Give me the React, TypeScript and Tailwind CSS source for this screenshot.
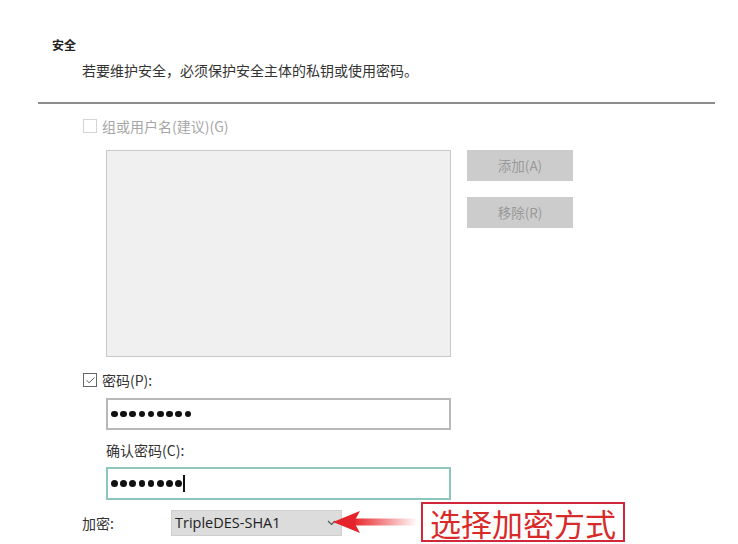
import { Check } from 'lucide-react'

const cjk = '"Noto Sans CJK SC", "Noto Sans", sans-serif'

function Dots({ count }: { count: number }) {
  return (
    <div className="flex items-center gap-[2.6px]">
      {Array.from({ length: count }).map((_, i) => (
        <span key={i} className="w-[6.6px] h-[6.6px] rounded-full bg-[#111]" />
      ))}
    </div>
  )
}

function RedArrow() {
  return (
    <svg width="88" height="26" viewBox="0 0 88 26" className="absolute left-[332px] top-[509px]">
      <defs>
        <linearGradient id="shaft" x1="0" y1="0" x2="1" y2="0">
          <stop offset="0" stopColor="#e8262b" stopOpacity="1" />
          <stop offset="1" stopColor="#e8262b" stopOpacity="0" />
        </linearGradient>
      </defs>
      <rect x="22" y="9.5" width="64" height="7" fill="url(#shaft)" />
      <path d="M1 13 L28 2 L22 13 L28 24 Z" fill="#e4232a" />
    </svg>
  )
}

export default function App() {
  return (
    <div className="w-[738px] h-[544px] bg-white relative overflow-hidden text-[#222]" style={{ fontFamily: cjk }}>
      {/* Header */}
      <div className="pt-[38px] pl-[52px] text-[12px] leading-[14px] font-bold">安全</div>
      <div className="mt-[10px] pl-[82px] text-[14px] leading-[16px] text-[#333]">
        若要维护安全，必须保护安全主体的私钥或使用密码。
      </div>
      <div className="mt-[24px] ml-[38px] w-[677px] h-[2px] bg-[#8c8c8c]" />

      {/* Group / user names */}
      <div className="mt-[14px] pl-[83px] flex items-center gap-[5px] h-[16px]">
        <span className="w-[14px] h-[14px] border border-[#d4d4d4] bg-white" />
        <span className="text-[14px] text-[#a6a6a6]">组或用户名(建议)(G)</span>
      </div>

      <div className="mt-[16px] pl-[106px] flex gap-[16px]">
        <div className="w-[345px] h-[207px] bg-[#f0f0f0] border border-[#c8c8c8]" />
        <div className="flex flex-col gap-[16px]">
          <div className="w-[106px] h-[31px] bg-[#cccccc] flex items-center justify-center text-[13.5px] text-[#999]">添加(A)</div>
          <div className="w-[106px] h-[31px] bg-[#cccccc] flex items-center justify-center text-[13.5px] text-[#999]">移除(R)</div>
        </div>
      </div>

      {/* Password */}
      <div className="mt-[15px] pl-[83px] flex items-center gap-[5px] h-[16px]">
        <span className="w-[14px] h-[14px] border border-[#666] bg-white flex items-center justify-center">
          <Check size={11} strokeWidth={1.8} className="text-[#333]" />
        </span>
        <span className="text-[14px] text-[#333]">密码(P):</span>
      </div>
      <div className="mt-[10px] ml-[106px] w-[345px] h-[32px] border-2 border-[#b8b8b8] bg-white flex items-center pl-[3px]">
        <Dots count={9} />
      </div>

      <div className="mt-[12px] pl-[106px] text-[14px] leading-[16px] text-[#333]">确认密码(C):</div>
      <div className="mt-[9px] ml-[106px] w-[345px] h-[33px] border-2 border-[#8cc6bd] bg-white flex items-center pl-[3px]">
        <Dots count={8} />
        <span className="ml-[1px] w-[2px] h-[17px] bg-[#111]" />
      </div>

      {/* Encryption */}
      <div className="mt-[10px] flex items-center h-[26px]">
        <span className="pl-[82px] w-[171px] text-[14px] text-[#333]">加密:</span>
        <div className="w-[171px] h-[26px] bg-[#dcdcdc] border border-[#cfcfcf] flex items-center justify-between pl-[3px] pr-[5px]">
          <span className="text-[14.5px] text-[#222]" style={{ fontFamily: '"Open Sans", "Noto Sans", sans-serif' }}>TripleDES-SHA1</span>
          <svg width="9" height="6" viewBox="0 0 9 6">
            <path d="M1 1 L4.5 4.5 L8 1" fill="none" stroke="#555" strokeWidth="1.2" />
          </svg>
        </div>
      </div>

      {/* Annotation */}
      <RedArrow />
      <div className="absolute left-[421px] top-[502px] w-[204px] h-[40px] border-2 border-[#d0283a] flex items-center justify-center text-[31px] leading-none text-[#d92a2a]">
        选择加密方式
      </div>
    </div>
  )
}
